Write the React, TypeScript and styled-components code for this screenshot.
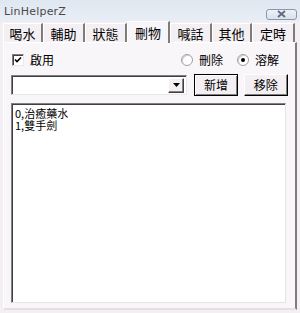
import { createGlobalStyle } from "styled-components";
import styled from "styled-components";

const GlobalStyle = createGlobalStyle`
    html, body {
        margin: 0;
        padding: 0;
        background: #f3eff3;
    }
    * {
        box-sizing: border-box;
    }
`;

const Window = styled.div`
    display: flex;
    flex-direction: column;
    width: 300px;
    height: 313px;
    background-color: #f3eff3;
    font-family: "Noto Sans CJK TC", "Liberation Sans", sans-serif;
    font-size: 12px;
    color: #000;
    overflow: hidden;
`;

const TitleBar = styled.div`
    display: flex;
    justify-content: space-between;
    align-items: center;
    height: 22px;
    padding: 0 3px 0 4px;
    background: linear-gradient(#dfe7f1, #e9eef5);
`;

const Title = styled.span`
    font-family: "DejaVu Sans", "Liberation Sans", sans-serif;
    font-size: 11px;
    color: #4a4a4a;
    letter-spacing: 0.2px;
`;

const CloseButton = styled.div`
    display: flex;
    justify-content: center;
    align-items: center;
    width: 31px;
    height: 11px;
    margin-top: 6px;
    border: 1px solid #8b98ab;
    border-radius: 3px;
    background: linear-gradient(#eef2f7, #d9e1ec);
`;

const TabStrip = styled.div`
    display: flex;
    align-items: flex-end;
    height: 20px;
    padding: 0 3px;
`;

const Tab = styled.div<{ $active?: boolean; $width: number }>`
    display: flex;
    justify-content: center;
    align-items: center;
    width: ${(p) => p.$width}px;
    height: ${(p) => (p.$active ? 22 : 19)}px;
    margin-bottom: ${(p) => (p.$active ? -1 : 0)}px;
    padding-top: ${(p) => (p.$active ? 0 : 1)}px;
    border-top: 1px solid #fff;
    border-left: 1px solid #fff;
    border-right: 2px solid #7d7d7d;
    background-color: ${(p) => (p.$active ? "#f9f6f9" : "#f3eff3")};
    font-size: 13px;
    line-height: 1;
    position: relative;
    z-index: ${(p) => (p.$active ? 1 : 0)};
`;

const Panel = styled.div`
    display: flex;
    flex-direction: column;
    gap: 7px;
    flex: 1;
    margin: 0 3px 3px 3px;
    padding: 10px 7px 5px 7px;
    background-color: #f9f6f9;
    border-top: 1px solid #fff;
    border-left: 1px solid #fff;
    border-right: 2px solid #7d7d7d;
    border-bottom: 2px solid #e4e0e4;
`;

const OptionRow = styled.div`
    display: flex;
    justify-content: space-between;
    align-items: center;
    height: 14px;
    padding-left: 1px;
`;

const Label = styled.label`
    display: flex;
    align-items: center;
    gap: 6px;
    line-height: 1;
`;

const CheckBox = styled.span`
    display: flex;
    justify-content: center;
    align-items: center;
    width: 12px;
    height: 12px;
    background-color: #fff;
    border-top: 1px solid #808080;
    border-left: 1px solid #808080;
    border-right: 1px solid #e8e8e8;
    border-bottom: 1px solid #e8e8e8;
    box-shadow: inset 1px 1px 0 #404040;
`;

const Radios = styled.div`
    display: flex;
    gap: 14px;
    padding-right: 9px;
`;

const Radio = styled.span<{ $checked?: boolean }>`
    display: flex;
    justify-content: center;
    align-items: center;
    width: 12px;
    height: 12px;
    border-radius: 50%;
    background-color: #fff;
    border: 1px solid #a0a0a0;
    box-shadow: inset 1px 1px 0 #d0d0d0;
    &::after {
        content: "";
        display: ${(p) => (p.$checked ? "block" : "none")};
        width: 4px;
        height: 4px;
        border-radius: 50%;
        background-color: #000;
    }
`;

const InputRow = styled.div`
    display: flex;
    align-items: center;
    gap: 6px;
    height: 22px;
`;

const Combo = styled.div`
    display: flex;
    justify-content: flex-end;
    align-items: center;
    width: 179px;
    height: 20px;
    padding: 2px;
    background-color: #fff;
    border-top: 1px solid #808080;
    border-left: 1px solid #808080;
    border-right: 1px solid #e8e8e8;
    border-bottom: 1px solid #e8e8e8;
    box-shadow: inset 1px 1px 0 #404040;
    margin-right: 1px;
`;

const ComboArrow = styled.div`
    display: flex;
    justify-content: center;
    align-items: center;
    width: 16px;
    height: 15px;
    background-color: #f3eff3;
    border-top: 1px solid #fff;
    border-left: 1px solid #fff;
    border-right: 1px solid #404040;
    border-bottom: 1px solid #404040;
    box-shadow: inset -1px -1px 0 #808080;
`;

const Button = styled.div<{ $default?: boolean; $width: number }>`
    display: flex;
    justify-content: center;
    align-items: center;
    width: ${(p) => p.$width}px;
    height: 22px;
    background-color: #f3eff3;
    border-top: 1px solid ${(p) => (p.$default ? "#000" : "#fff")};
    border-left: 1px solid ${(p) => (p.$default ? "#000" : "#fff")};
    border-right: 1px solid #000;
    border-bottom: 1px solid #000;
    box-shadow: ${(p) =>
        p.$default
            ? "inset 1px 1px 0 #fff, inset -1px -1px 0 #808080"
            : "inset -1px -1px 0 #808080"};
    font-size: 12px;
    line-height: 1;
`;

const List = styled.div`
    display: flex;
    flex-direction: column;
    gap: 0;
    flex: 1;
    margin-right: 2px;
    padding: 3px 3px;
    background-color: #fff;
    border-top: 1px solid #808080;
    border-left: 1px solid #808080;
    border-right: 1px solid #e4e4e4;
    border-bottom: 1px solid #e4e4e4;
    box-shadow: inset 1px 1px 0 #404040;
`;

const ListItem = styled.div`
    font-size: 11px;
    line-height: 12px;
    white-space: nowrap;
`;

const tabs = [
    { name: "喝水", width: 40 },
    { name: "輔助", width: 42 },
    { name: "狀態", width: 42 },
    { name: "刪物", width: 43, active: true },
    { name: "喊話", width: 42 },
    { name: "其他", width: 40 },
    { name: "定時", width: 43 },
];

const items = ["0,治癒藥水", "1,雙手劍"];

function App() {
    return (
        <Window>
            <GlobalStyle />
            <TitleBar>
                <Title>LinHelperZ</Title>
                <CloseButton>
                    <svg width="11" height="8" viewBox="0 0 11 8">
                        <path d="M2 1 L9 7 M9 1 L2 7" stroke="#5d6b80" strokeWidth="1.8" fill="none" />
                    </svg>
                </CloseButton>
            </TitleBar>
            <TabStrip>
                {tabs.map((t) => (
                    <Tab key={t.name} $active={t.active} $width={t.width}>
                        {t.name}
                    </Tab>
                ))}
            </TabStrip>
            <Panel>
                <OptionRow>
                    <Label>
                        <CheckBox>
                            <svg width="8" height="8" viewBox="0 0 8 8">
                                <path d="M1 3.5 L3 5.5 L7 1.5" stroke="#000" strokeWidth="1.6" fill="none" />
                            </svg>
                        </CheckBox>
                        啟用
                    </Label>
                    <Radios>
                        <Label>
                            <Radio />
                            刪除
                        </Label>
                        <Label>
                            <Radio $checked />
                            溶解
                        </Label>
                    </Radios>
                </OptionRow>
                <InputRow>
                    <Combo>
                        <ComboArrow>
                            <svg width="7" height="4" viewBox="0 0 7 4">
                                <path d="M0 0 H7 L3.5 4 Z" fill="#000" />
                            </svg>
                        </ComboArrow>
                    </Combo>
                    <Button $default $width={44}>新增</Button>
                    <Button $width={45}>移除</Button>
                </InputRow>
                <List>
                    {items.map((item) => (
                        <ListItem key={item}>{item}</ListItem>
                    ))}
                </List>
            </Panel>
        </Window>
    );
}

export default App;
